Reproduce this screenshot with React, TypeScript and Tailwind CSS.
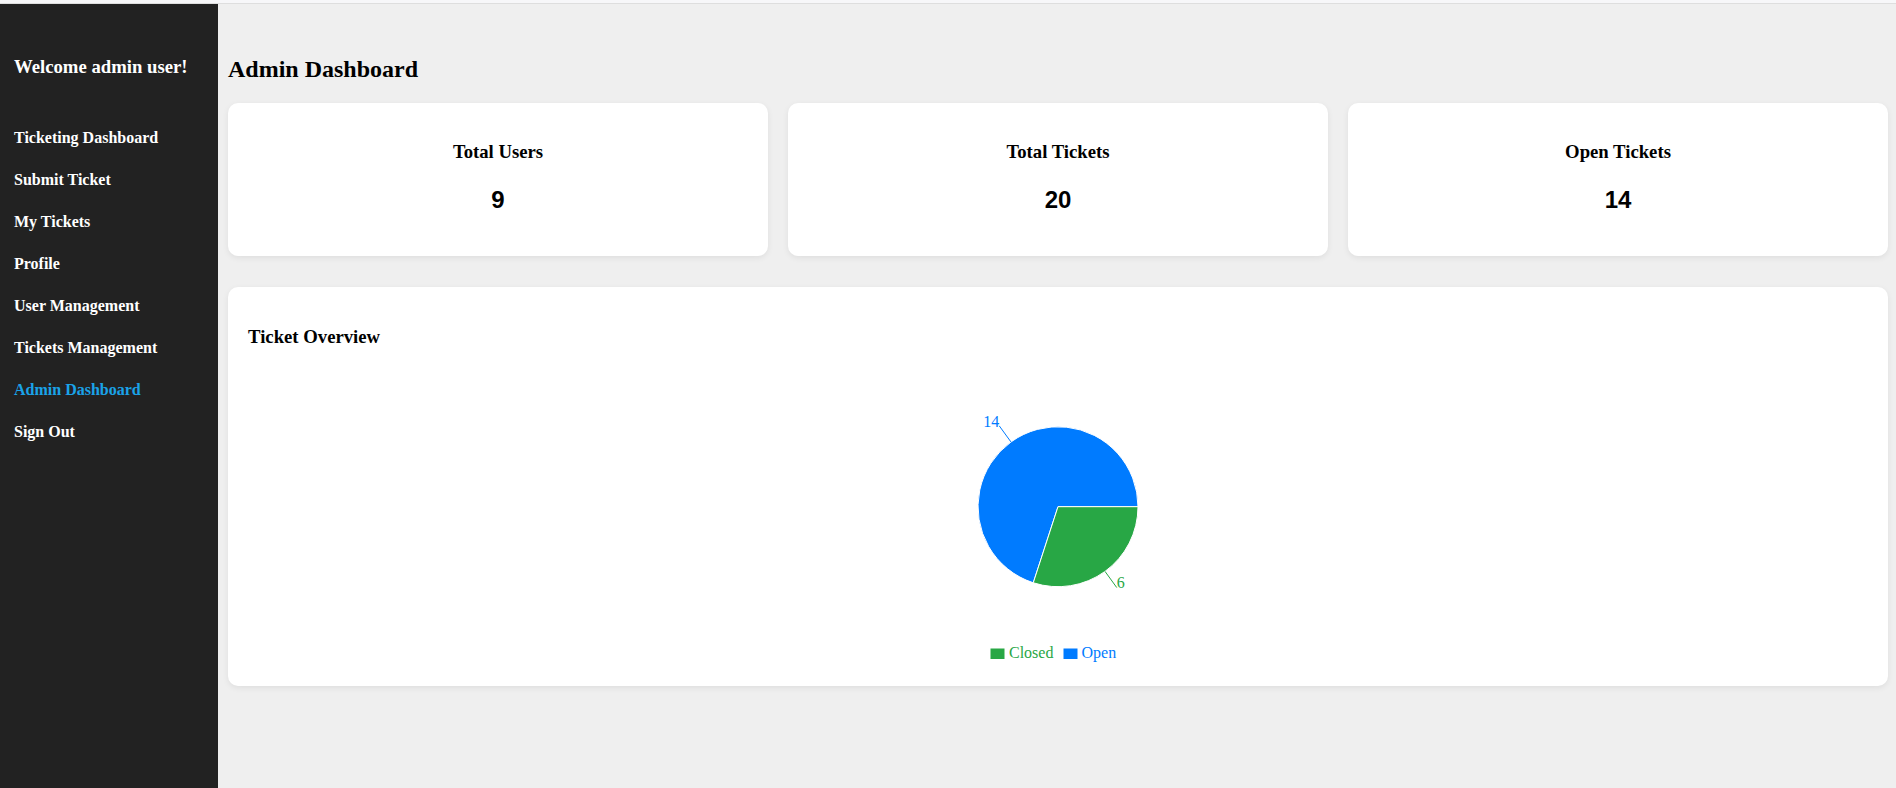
import React from 'react';

const navItems = [
  'Ticketing Dashboard',
  'Submit Ticket',
  'My Tickets',
  'Profile',
  'User Management',
  'Tickets Management',
  'Admin Dashboard',
  'Sign Out',
];

const stats = [
  { title: 'Total Users', value: 9 },
  { title: 'Total Tickets', value: 20 },
  { title: 'Open Tickets', value: 14 },
];

function StatCard({ title, value }: { title: string; value: number }) {
  return (
    <div className="flex-1 h-[153px] bg-white rounded-[10px] shadow-[0_2px_6px_rgba(0,0,0,0.07)] flex flex-col items-center pt-[38px]">
      <h3 className="text-[18.72px] leading-[22px] font-bold text-black">{title}</h3>
      <p className="mt-[23px] text-[24px] leading-[28px] font-bold text-black font-['Liberation_Sans',Arial,sans-serif]">
        {value}
      </p>
    </div>
  );
}

function TicketPie() {
  // open: 14, closed: 6 -> open slice 0..252deg, closed 252..360deg
  return (
    <svg width="400" height="320" className="block">
      <path d="M200,148.7 L280,148.7 A80,80 0 1,0 175.28,224.78 Z" fill="#007bff" stroke="#fff" strokeWidth="1" />
      <path d="M200,148.7 L175.28,224.78 A80,80 0 0,0 280,148.7 Z" fill="#28a745" stroke="#fff" strokeWidth="1" />

      <line x1="152.98" y1="83.98" x2="141.22" y2="67.8" stroke="#007bff" strokeWidth="1" />
      <text x="141.22" y="68.5" textAnchor="end" fill="#007bff" fontSize="16" fontFamily="'Liberation Serif', serif">
        14
      </text>
      <line x1="247.02" y1="213.42" x2="258.78" y2="229.6" stroke="#28a745" strokeWidth="1" />
      <text x="258.78" y="230.3" textAnchor="start" fill="#28a745" fontSize="16" fontFamily="'Liberation Serif', serif">
        6
      </text>

      {/* legend */}
      <rect x="132.5" y="290.5" width="14" height="10.5" fill="#28a745" />
      <text x="151" y="300" fill="#28a745" fontSize="16" fontFamily="'Liberation Serif', serif">
        Closed
      </text>
      <rect x="205.5" y="290.5" width="14" height="10.5" fill="#007bff" />
      <text x="223.5" y="300" fill="#007bff" fontSize="16" fontFamily="'Liberation Serif', serif">
        Open
      </text>
    </svg>
  );
}

export default function App() {
  return (
    <div className="h-screen flex flex-col overflow-hidden font-['Liberation_Serif',serif]">
      <div className="h-[4px] bg-[#f7f7f9] border-b border-[#dedede]" />
      <div className="flex flex-1">
        <aside className="w-[218px] bg-[#222222] text-white pl-[14px]">
          <h3 className="mt-[52px] text-[18.72px] leading-[22px] font-bold">Welcome admin user!</h3>
          <ul className="mt-[50px] flex flex-col gap-[22px]">
            {navItems.map((item) => (
              <li
                key={item}
                className={`text-[16px] leading-[20px] font-bold ${
                  item === 'Admin Dashboard' ? 'text-[#1aa3e8]' : 'text-white'
                }`}
              >
                {item}
              </li>
            ))}
          </ul>
        </aside>

        <main className="flex-1 bg-[#efefef] pl-[10px] pr-[8px]">
          <h2 className="mt-[51px] text-[24px] leading-[28px] font-bold text-black">Admin Dashboard</h2>

          <div className="mt-[20px] flex gap-[20px]">
            {stats.map((s) => (
              <StatCard key={s.title} title={s.title} value={s.value} />
            ))}
          </div>

          <div className="mt-[31px] h-[399px] bg-white rounded-[10px] shadow-[0_2px_6px_rgba(0,0,0,0.07)] px-[20px] pt-[39px]">
            <h3 className="text-[18.72px] leading-[22px] font-bold text-black">Ticket Overview</h3>
            <div className="mt-[10px] flex justify-center">
              <TicketPie />
            </div>
          </div>
        </main>
      </div>
    </div>
  );
}
